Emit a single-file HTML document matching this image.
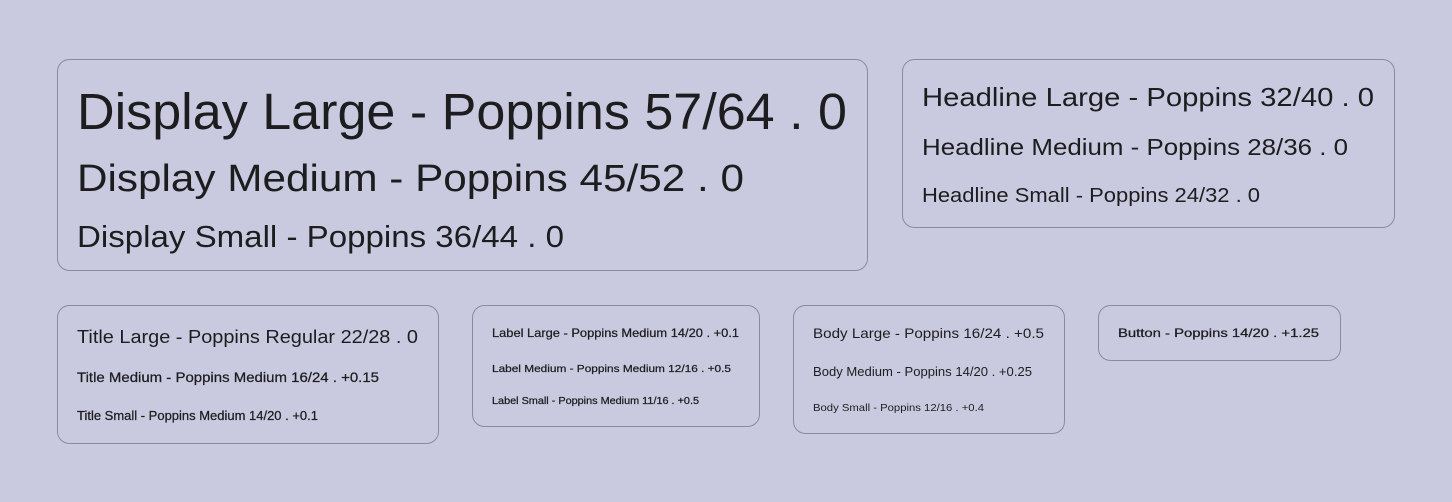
<!DOCTYPE html>
<html><head><meta charset="utf-8"><style>
html,body{margin:0;padding:0;background:#c9cadf;width:1452px;height:502px;overflow:hidden}
svg{display:block}
text{font-family:"Liberation Sans",sans-serif;fill:#1d1d1f}
.m{stroke:#1d1d1f;stroke-width:0.25}
</style></head><body>
<svg width="1452" height="502" viewBox="0 0 1452 502">
<g fill="none" stroke="#8b8b98" stroke-width="1">
<rect x="57.5" y="59.5" width="810" height="211" rx="12"/>
<rect x="902.5" y="59.5" width="492" height="168" rx="12"/>
<rect x="57.5" y="305.5" width="381" height="138" rx="12"/>
<rect x="472.5" y="305.5" width="287" height="121" rx="12"/>
<rect x="793.5" y="305.5" width="271" height="128" rx="12"/>
<rect x="1098.5" y="305.5" width="242" height="55" rx="12"/>
</g>
<text x="77" y="129" font-size="51" textLength="770" lengthAdjust="spacingAndGlyphs">Display Large - Poppins 57/64 . 0</text>
<text x="77" y="191" font-size="38" textLength="667" lengthAdjust="spacingAndGlyphs">Display Medium - Poppins 45/52 .  0</text>
<text x="77" y="247" font-size="31" textLength="487" lengthAdjust="spacingAndGlyphs">Display Small - Poppins 36/44 . 0</text>
<text x="922" y="106" font-size="26" textLength="452" lengthAdjust="spacingAndGlyphs">Headline Large - Poppins 32/40 . 0</text>
<text x="922" y="155" font-size="23" textLength="426" lengthAdjust="spacingAndGlyphs">Headline Medium - Poppins 28/36 . 0</text>
<text x="922" y="202" font-size="20" textLength="338" lengthAdjust="spacingAndGlyphs">Headline Small - Poppins 24/32 . 0</text>
<text x="77" y="343" font-size="18" textLength="341" lengthAdjust="spacingAndGlyphs">Title Large - Poppins Regular 22/28 . 0</text>
<text class="m" x="77" y="382" font-size="14" textLength="302" lengthAdjust="spacingAndGlyphs">Title Medium - Poppins Medium 16/24 . +0.15</text>
<text class="m" x="77" y="420" font-size="12.5" textLength="241" lengthAdjust="spacingAndGlyphs">Title Small - Poppins Medium 14/20 . +0.1</text>
<text class="m" x="492" y="337" font-size="12" textLength="247" lengthAdjust="spacingAndGlyphs">Label Large - Poppins Medium 14/20 . +0.1</text>
<text class="m" x="492" y="372" font-size="10.5" textLength="239" lengthAdjust="spacingAndGlyphs">Label Medium - Poppins Medium 12/16 . +0.5</text>
<text class="m" x="492" y="404" font-size="10" textLength="207" lengthAdjust="spacingAndGlyphs">Label Small - Poppins Medium 11/16 . +0.5</text>
<text x="813" y="338" font-size="14" textLength="231" lengthAdjust="spacingAndGlyphs">Body Large - Poppins 16/24 . +0.5</text>
<text x="813" y="376" font-size="12.5" textLength="219" lengthAdjust="spacingAndGlyphs">Body Medium - Poppins 14/20 . +0.25</text>
<text x="813" y="411" font-size="10.5" textLength="171" lengthAdjust="spacingAndGlyphs">Body Small - Poppins 12/16 . +0.4</text>
<text class="m" x="1118" y="337" font-size="12" textLength="201" lengthAdjust="spacingAndGlyphs">Button - Poppins 14/20 . +1.25</text>
</svg>
</body></html>
